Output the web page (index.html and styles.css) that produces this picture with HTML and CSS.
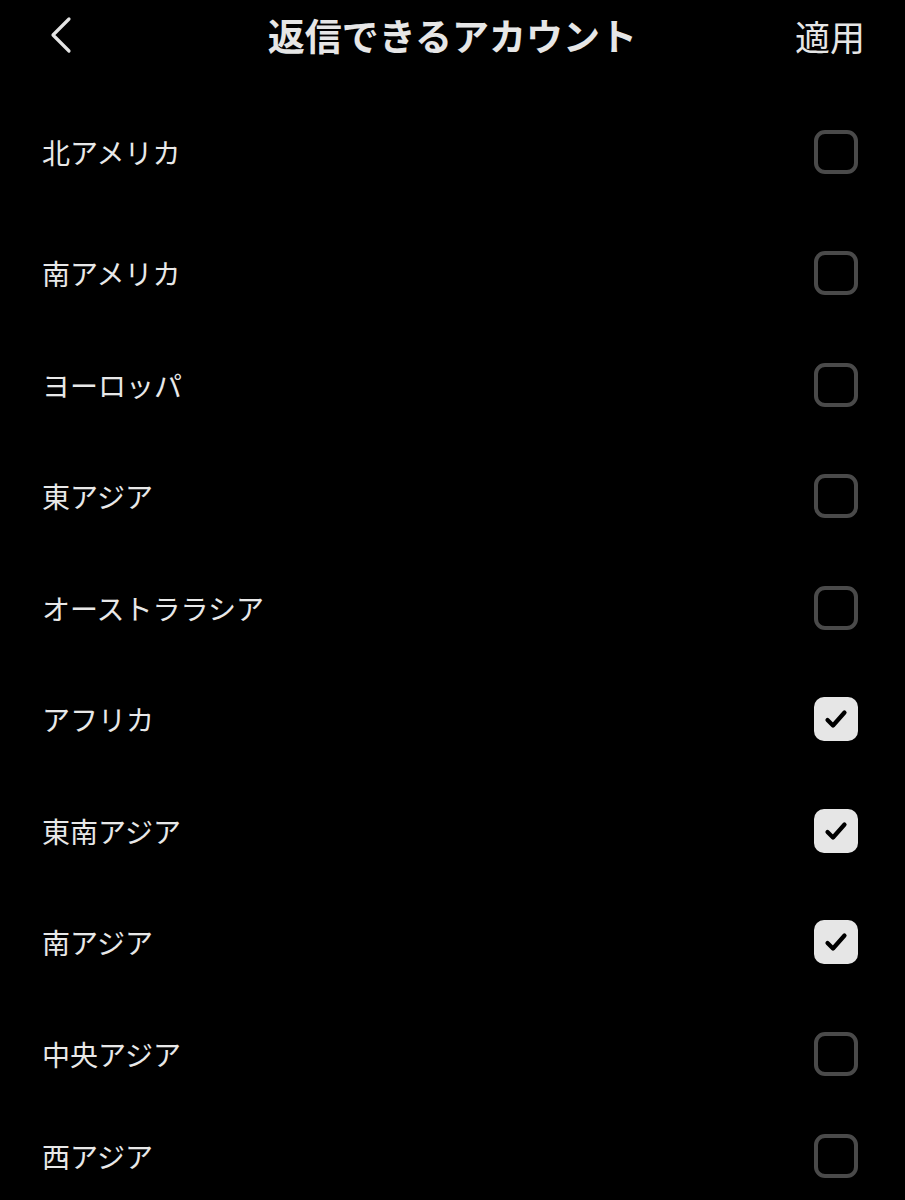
FILE: index.html
```html
<!DOCTYPE html>
<html lang="ja">
<head>
<meta charset="utf-8">
<title>返信できるアカウント</title>
<link rel="stylesheet" href="styles.css">
</head>
<body>
<div class="screen">
  <header class="topbar">
    <div class="back">
      <svg class="chevron" width="24" height="38" viewBox="0 0 24 38"><polyline points="21,3 5,19 21,35" fill="none" stroke="#e4e4e4" stroke-width="3.2" stroke-linecap="round" stroke-linejoin="round"/></svg>
    </div>
    <h1 class="title">返信できるアカウント</h1>
    <div class="apply">適用</div>
  </header>
  <ul class="list">
    <li class="row row-first"><span class="label">北アメリカ</span><span class="box"></span></li>
    <li class="row"><span class="label">南アメリカ</span><span class="box"></span></li>
    <li class="row"><span class="label">ヨーロッパ</span><span class="box"></span></li>
    <li class="row"><span class="label">東アジア</span><span class="box"></span></li>
    <li class="row"><span class="label">オーストララシア</span><span class="box"></span></li>
    <li class="row"><span class="label">アフリカ</span><span class="box checked"><svg width="44" height="44" viewBox="0 0 44 44"><polyline points="13.5,23 19,28.5 30.5,15.5" fill="none" stroke="#000" stroke-width="4.2" stroke-linecap="round" stroke-linejoin="round"/></svg></span></li>
    <li class="row"><span class="label">東南アジア</span><span class="box checked"><svg width="44" height="44" viewBox="0 0 44 44"><polyline points="13.5,23 19,28.5 30.5,15.5" fill="none" stroke="#000" stroke-width="4.2" stroke-linecap="round" stroke-linejoin="round"/></svg></span></li>
    <li class="row"><span class="label">南アジア</span><span class="box checked"><svg width="44" height="44" viewBox="0 0 44 44"><polyline points="13.5,23 19,28.5 30.5,15.5" fill="none" stroke="#000" stroke-width="4.2" stroke-linecap="round" stroke-linejoin="round"/></svg></span></li>
    <li class="row"><span class="label">中央アジア</span><span class="box"></span></li>
    <li class="row row-last"><span class="label">西アジア</span><span class="box"></span></li>
  </ul>
</div>
</body>
</html>
```
FILE: styles.css
```css
html, body {
  margin: 0;
  padding: 0;
  background: #000;
}
body {
  font-family: "Noto Sans CJK JP", "Noto Sans", sans-serif;
  color: #e6e6e6;
}
.screen {
  width: 905px;
  min-height: 1200px;
  background: #000;
}
.topbar {
  height: 70px;
  display: grid;
  grid-template-columns: 1fr auto 1fr;
  align-items: center;
}
.back {
  padding-left: 48px;
  display: flex;
  align-items: center;
}
.chevron {
  display: block;
}
.title {
  margin: 0;
  font-size: 37px;
  font-weight: 700;
  line-height: 1;
  color: #e6e6e6;
}
.apply {
  justify-self: end;
  padding-right: 40px;
  font-size: 35px;
  font-weight: 400;
  line-height: 1;
  color: #e6e6e6;
}
.list {
  list-style: none;
  margin: 16.75px 0 0;
  padding: 0;
}
.row {
  height: 111.5px;
  display: flex;
  align-items: center;
  justify-content: space-between;
  padding: 0 47px 0 42px;
}
.row-first {
  height: 130.5px;
}
.row-last {
  height: 92.5px;
}
.label {
  font-size: 28px;
  line-height: 1;
  font-weight: 400;
  color: #e8e8e8;
}
.box {
  width: 44px;
  height: 44px;
  box-sizing: border-box;
  border: 4px solid #4a4a4a;
  border-radius: 11px;
  display: flex;
  align-items: center;
  justify-content: center;
}
.box.checked {
  border: none;
  background: #e6e6e6;
  border-radius: 10px;
}
.box svg {
  display: block;
}
```
